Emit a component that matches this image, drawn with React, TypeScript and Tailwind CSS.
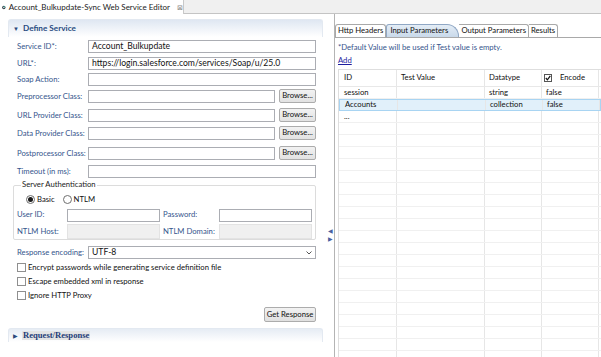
import React from "react";

const label = "text-[#35558c]";
const inputCls = "h-[13px] border border-[#abadb3] bg-white px-[3px] flex items-center text-[8.6px]";

function Row({ text, h, value, browse }: { text: string; h: number; value?: string; browse?: boolean }) {
  return (
    <div className="flex items-start" style={{ height: h }}>
      <div className={`w-[71px] shrink-0 h-[13px] flex items-center ${label}`}>{text}</div>
      {browse ? (
        <div className="flex gap-[4px]">
          <div className={`${inputCls} w-[187px]`}>{value}</div>
          <button className="h-[14px] w-[37px] -mt-px border border-[#acacac] rounded-[2px] bg-gradient-to-b from-[#f2f2f2] to-[#e2e2e2] text-[7.7px] leading-none">
            Browse...
          </button>
        </div>
      ) : (
        <div className={`${inputCls} w-[228px]`}>{value}</div>
      )}
    </div>
  );
}

function Check({ text }: { text: string }) {
  return (
    <div className="flex items-center h-[13px] gap-[2px]">
      <span className="w-[9px] h-[9px] border border-[#8f8f8f] bg-white" />
      <span>{text}</span>
    </div>
  );
}

const rows = [
  { id: "session", type: "string", enc: "false" },
  { id: "Accounts", type: "collection", enc: "false", sel: true },
  { id: "...", type: "", enc: "" },
];

export default function App() {
  const empty = Array.from({ length: 20 });
  return (
    <div className="w-[601px] h-[357px] bg-white overflow-hidden whitespace-nowrap font-['Lato',sans-serif] text-[7.7px] text-[#111] leading-none">
      {/* editor tab strip */}
      <div className="flex h-[14px]">
        <div className="w-[184px] flex items-center pl-[2px] bg-white border-r border-[#c9c9c9]">
          <svg width="9" height="9" viewBox="0 0 10 10" className="mr-[3px]">
            <circle cx="5" cy="5" r="4.6" fill="#2f3b45" />
            <path d="M5 0.6 A4.4 4.4 0 0 1 9.4 5 L5 5 Z" fill="#3fb3a4" />
            <circle cx="5" cy="5" r="1.8" fill="#e8f4f2" />
          </svg>
          <span className="text-[8px] text-[#222]">Account_Bulkupdate-Sync Web Service Editor</span>
          <span className="ml-[7px] text-[7px] text-[#8a8a8a]">⊠</span>
        </div>
        <div className="flex-1 bg-[#f0f0f0] border-b border-[#c4c4c4]" />
      </div>

      <div className="flex h-[343px]">
        {/* left: form */}
        <div className="w-[327px] flex flex-col">
          <div className="ml-[8px] mt-[5px] w-[315px] h-[18px] rounded-t-[3px] border border-b-0 border-[#e3e9f1] bg-gradient-to-b from-[#dfe7f2] to-white flex items-center pl-[4px] gap-[4px]">
            <span className="text-[6px] text-[#2a4a7a]">▼</span>
            <span className="text-[8.2px] font-bold text-[#284b80]">Define Service</span>
          </div>

          <div className="pl-[17px] mt-[3px]">
            <Row text="Service ID*:" h={17} value="Account_Bulkupdate" />
            <Row text="URL*:" h={16} value="https://login.salesforce.com/services/Soap/u/25.0" />
            <Row text="Soap Action:" h={17} />
            <Row text="Preprocessor Class:" h={19} browse />
            <Row text="URL Provider Class:" h={18} browse />
            <Row text="Data Provider Class:" h={20} browse />
            <Row text="Postprocessor Class:" h={18} browse />
            <Row text="Timeout (in ms):" h={16} />
          </div>

          {/* server authentication group */}
          <div className="ml-[13px] w-[303px] mt-[4px] h-[55px] border border-[#dcdcdc] rounded-[2px] relative px-[3px]">
            <span className="absolute -top-[5px] left-[7px] bg-white px-[1px] text-[#222]">Server Authentication</span>
            <div className="flex items-center h-[13px] mt-[7px] pl-[9px] gap-[2px]">
              <span className="w-[9px] h-[9px] rounded-full border border-[#6f6f6f] flex items-center justify-center">
                <span className="w-[5px] h-[5px] rounded-full bg-[#1a1a1a]" />
              </span>
              <span className="mr-[6px]">Basic</span>
              <span className="w-[9px] h-[9px] rounded-full border border-[#6f6f6f]" />
              <span>NTLM</span>
            </div>
            <div className="flex items-center h-[14px] mt-[2px]">
              <span className={`w-[50px] ${label}`}>User ID:</span>
              <span className="w-[93px] h-[13px] border border-[#abadb3]" />
              <span className={`w-[56px] ml-[3px] ${label}`}>Password:</span>
              <span className="w-[93px] h-[13px] border border-[#abadb3]" />
            </div>
            <div className="flex items-center h-[15px] mt-[2px]">
              <span className={`w-[50px] ${label}`}>NTLM Host:</span>
              <span className="w-[93px] h-[15px] border border-[#e3e3e3] bg-[#f0f0f0]" />
              <span className={`w-[56px] ml-[3px] ${label}`}>NTLM Domain:</span>
              <span className="w-[93px] h-[15px] border border-[#e3e3e3] bg-[#f0f0f0]" />
            </div>
          </div>

          <div className="pl-[17px] mt-[6px] flex items-center h-[13px]">
            <span className={`w-[71px] ${label}`}>Response encoding:</span>
            <div className="w-[228px] h-[13px] border border-[#abadb3] flex items-center justify-between px-[3px]">
              <span className="text-[8.6px]">UTF-8</span>
              <svg width="6" height="4" viewBox="0 0 6 4">
                <path d="M0.5 0.5 L3 3 L5.5 0.5" stroke="#555" fill="none" strokeWidth="1" />
              </svg>
            </div>
          </div>

          <div className="pl-[17px] mt-[2px] flex flex-col gap-[1px]">
            <Check text="Encrypt passwords while generating service definition file" />
            <Check text="Escape embedded xml in response" />
            <Check text="Ignore HTTP Proxy" />
          </div>

          <div className="flex justify-end w-[316px] mt-[5px]">
            <button className="h-[15px] w-[52px] border border-[#acacac] rounded-[2px] bg-gradient-to-b from-[#f2f2f2] to-[#e0e0e0] text-[7.7px] leading-none">
              Get Response
            </button>
          </div>

          <div className="ml-[8px] mt-[6px] w-[315px] h-[14px] rounded-t-[3px] border border-b-0 border-[#e3e9f1] bg-gradient-to-b from-[#e6ecf4] to-white flex items-center pl-[4px] gap-[4px]">
            <span className="text-[6px] text-[#2a4a7a]">▶</span>
            <span className="font-['Liberation_Serif',serif] text-[8.6px] font-bold text-[#1f3d78] bg-[#e4e4e4] px-[1px]">Request/Response</span>
          </div>
        </div>

        {/* sash arrows */}
        <div className="w-[7px] flex flex-col items-center pt-[214px] gap-[2px] text-[6px] text-[#4a5fa0]">
          <span>◀</span>
          <span>▶</span>
        </div>

        {/* right: parameters */}
        <div className="flex-1 border-l border-[#b4b4b4] pt-[11px]">
          <div className="flex h-[13px] border-b border-[#a9a9a9] items-end">
            <div className="h-[13px] px-[2px] border border-b-0 border-[#a9a9a9] rounded-t-[3px] flex items-center">Http Headers</div>
            <div className="h-[13px] w-[73px] pl-[3px] border border-b-0 border-[#8fa7c4] rounded-tr-[12px] rounded-tl-[3px] bg-gradient-to-b from-[#e4edf6] to-[#c9d9ea] flex items-center">Input Parameters</div>
            <div className="h-[13px] px-[2px] border border-b-0 border-l-0 border-[#a9a9a9] rounded-tr-[3px] flex items-center">Output Parameters</div>
            <div className="h-[13px] px-[2px] border border-b-0 border-l-0 border-[#a9a9a9] rounded-tr-[3px] flex items-center">Results</div>
          </div>
          <div className={`mt-[5px] pl-[3px] h-[10px] flex items-center ${label}`}>*Default Value will be used if Test value is empty.</div>
          <div className="mt-[3px] pl-[3px] h-[10px] flex items-center">
            <span className="underline text-[#1d1d9e]">Add</span>
          </div>

          <div className="mt-[3px] ml-[3px] border-t border-l border-[#dedede]">
            <div className="flex h-[17px] items-center border-b border-[#e8e8e8]">
              <div className="w-[58px] pl-[5px] border-r border-[#e6e6e6] h-full flex items-center">ID</div>
              <div className="w-[88px] pl-[4px] border-r border-[#e6e6e6] h-full flex items-center">Test Value</div>
              <div className="w-[57px] pl-[4px] border-r border-[#e6e6e6] h-full flex items-center">Datatype</div>
              <div className="w-[57px] pl-[2px] border-r border-[#e6e6e6] h-full flex items-center gap-[8px]">
                <span className="w-[8px] h-[8px] border border-[#555] flex items-center justify-center">
                  <svg width="6" height="6" viewBox="0 0 6 6">
                    <path d="M0.8 3 L2.4 4.8 L5.3 0.8" stroke="#111" fill="none" strokeWidth="1.2" />
                  </svg>
                </span>
                <span>Encode</span>
              </div>
            </div>
            {rows.map((r) => (
              <div
                key={r.id}
                className={`flex h-[12px] items-center border-b ${r.sel ? "bg-[#e1f0fa] border border-[#a8d4f2]" : "border-[#f0f0f0]"}`}
              >
                <div className="w-[58px] pl-[5px] border-r border-[#e6e6e6] h-full flex items-center">{r.id}</div>
                <div className="w-[88px] border-r border-[#e6e6e6] h-full" />
                <div className="w-[57px] pl-[4px] border-r border-[#e6e6e6] h-full flex items-center">{r.type}</div>
                <div className="w-[57px] pl-[4px] border-r border-[#e6e6e6] h-full flex items-center">{r.enc}</div>
              </div>
            ))}
            {empty.map((_, i) => (
              <div key={i} className="flex h-[12px] border-b border-[#f0f0f0]">
                <div className="w-[58px] border-r border-[#e6e6e6] h-full" />
                <div className="w-[88px] border-r border-[#e6e6e6] h-full" />
                <div className="w-[57px] border-r border-[#e6e6e6] h-full" />
                <div className="w-[57px] border-r border-[#e6e6e6] h-full" />
              </div>
            ))}
          </div>
        </div>
      </div>
    </div>
  );
}
